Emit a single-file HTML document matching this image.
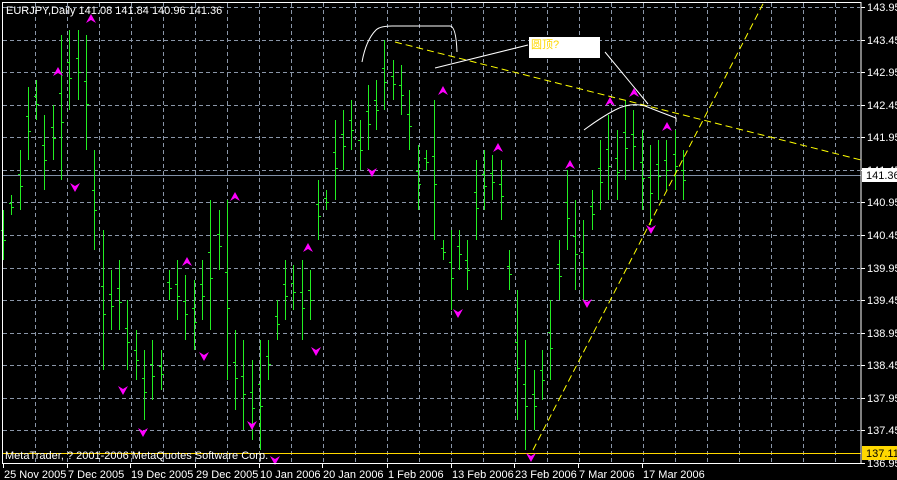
<!DOCTYPE html>
<html><head><meta charset="utf-8"><style>
html,body{margin:0;padding:0;background:#000;width:897px;height:480px;overflow:hidden}
svg{display:block}
text{font-family:"Liberation Sans","Noto Sans CJK SC",sans-serif;font-size:11px;fill:#fff}
line{shape-rendering:crispEdges}
</style></head><body>
<svg id="s" width="897" height="480" xmlns="http://www.w3.org/2000/svg">
<rect x="0" y="0" width="897" height="480" fill="#000"/>
<g id="grid" stroke="#8a96a8" stroke-dasharray="4,3" stroke-width="1"></g>
<line x1="2" y1="175.5" x2="861" y2="175.5" stroke="#8090a8"/>
<line x1="2" y1="453.5" x2="861" y2="453.5" stroke="#ffd800"/>
<g id="bars" stroke="#22ee22" stroke-width="1"></g>
<g id="arr"></g>
<g fill="none" stroke-width="1">
<line x1="395" y1="42" x2="861" y2="160" stroke="#ffff00" stroke-dasharray="7,4" style="shape-rendering:auto"/>
<line x1="533" y1="450" x2="765" y2="0" stroke="#ffff00" stroke-dasharray="7,4" style="shape-rendering:auto"/>
<path d="M362 62 Q366 40 376 30 Q380 26 392 26 L450 26 Q456 26 457 52" stroke="#fff"/>
<line x1="435" y1="68" x2="528" y2="45" stroke="#fff" style="shape-rendering:auto"/>
<line x1="605" y1="52" x2="648" y2="104" stroke="#fff" style="shape-rendering:auto"/>
<path d="M584 130 Q600 118 615 110 Q630 102 645 106 Q660 112 676 118 L676 122" stroke="#fff"/>
</g>
<rect x="529" y="37" width="71" height="21" fill="#fff"/>
<text x="531" y="48" style="fill:#ffd800;font-size:11px">圆顶?</text>
<rect x="2.5" y="2.5" width="858.5" height="461" fill="none" stroke="#fff"/>
<g id="ax"></g>
<rect x="862" y="168" width="35" height="14" fill="#fff"/>
<text x="866" y="179" style="fill:#000">141.36</text>
<rect x="862" y="446" width="35" height="14" fill="#ffd800"/>
<text x="866" y="457" style="fill:#000">137.11</text>
<text x="6" y="14">EURJPY,Daily  141.08 141.84 140.96 141.36</text>
<text x="5" y="459">MetaTrader, ? 2001-2006 MetaQuotes Software Corp.</text>
</svg>
<script>
var NS="http://www.w3.org/2000/svg";
function el(p,t,a){var e=document.createElementNS(NS,t);for(var k in a)e.setAttribute(k,a[k]);p.appendChild(e);return e;}
var g=document.getElementById('grid'),ax=document.getElementById('ax');
for(var i=0;i<14;i++){var y=Math.round(7+i*32.57);el(g,'line',{x1:3,y1:y+.5,x2:860,y2:y+.5});
 el(ax,'line',{x1:861,y1:y+.5,x2:865,y2:y+.5,stroke:'#fff'});
 var t=el(ax,'text',{x:867,y:y+4});t.textContent=(143.95-i*0.5).toFixed(2);}
el(ax,'line',{x1:861,y1:463.5,x2:865,y2:463.5,stroke:'#fff'});var tt=el(ax,'text',{x:867,y:467});tt.textContent='136.95';
for(var x=35;x<860;x+=32){el(g,'line',{x1:x+.5,y1:3,x2:x+.5,y2:463});}
var d=[["25 Nov 2005",3],["7 Dec 2005",67],["19 Dec 2005",130],["29 Dec 2005",195],["10 Jan 2006",259],["20 Jan 2006",322],["1 Feb 2006",387],["13 Feb 2006",451],["23 Feb 2006",514],["7 Mar 2006",578],["17 Mar 2006",642]];
d.forEach(function(a){el(ax,'line',{x1:a[1]+.5,y1:463,x2:a[1]+.5,y2:468,stroke:'#fff'});var t=el(ax,'text',{x:a[1]+1,y:478});t.textContent=a[0];});
var b=[[210,260],[195,215],[150,210],[87,160],[80,120],[115,190],[105,160],[35,180],[30,110],[30,100],[35,150],[150,250],[230,370],[270,330],[260,330],[300,370],[330,380],[350,420],[340,400],[350,390],[270,300],[260,320],[275,340],[280,350],[260,320],[200,330],[210,270],[200,380],[330,410],[340,430],[360,440],[340,450],[340,380],[300,340],[260,320],[265,310],[260,340],[270,320],[180,240],[190,210],[120,200],[110,170],[100,150],[120,170],[85,150],[80,130],[40,110],[60,100],[65,115],[90,150],[145,210],[150,170],[100,240],[240,260],[230,310],[230,270],[240,290],[160,240],[150,210],[155,200],[160,220],[250,290],[290,420],[340,450],[370,430],[350,400],[300,380],[240,300],[170,250],[200,290],[220,300],[190,230],[140,210],[115,200],[130,200],[100,180],[110,170],[130,210],[145,225],[140,200],[140,190],[130,190],[150,200]];
var bg=document.getElementById('bars');
var step=(683-3)/(b.length-1);
b.forEach(function(v,i){var x=Math.round(3+step*i)+.5;var h=v[0],l=v[1];
 el(bg,'line',{x1:x,y1:h,x2:x,y2:l});var o=Math.round(h+(l-h)*0.4)+.5,c=Math.round(h+(l-h)*0.6)+.5;
 el(bg,'line',{x1:x-2.5,y1:o,x2:x,y2:o});
 el(bg,'line',{x1:x,y1:c,x2:x+2.5,y2:c});});
var ar=document.getElementById('arr');
var up=[[58,72],[91,19],[235,197],[187,262],[308,248],[443,91],[498,148],[570,165],[610,102],[634,93],[667,127]];
var dn=[[75,187],[123,390],[143,432],[204,356],[252,425],[275,460],[316,351],[372,172],[458,313],[531,457],[587,303],[651,229]];
up.forEach(function(p){el(ar,'path',{d:'M'+p[0]+' '+(p[1]-5)+' L'+(p[0]+5)+' '+(p[1]+4)+' L'+p[0]+' '+(p[1]+1)+' L'+(p[0]-5)+' '+(p[1]+4)+'Z',fill:'#ff00ff'});});
dn.forEach(function(p){el(ar,'path',{d:'M'+p[0]+' '+(p[1]+5)+' L'+(p[0]+5)+' '+(p[1]-4)+' L'+p[0]+' '+(p[1]-1)+' L'+(p[0]-5)+' '+(p[1]-4)+'Z',fill:'#ff00ff'});});
</script>
</body></html>
